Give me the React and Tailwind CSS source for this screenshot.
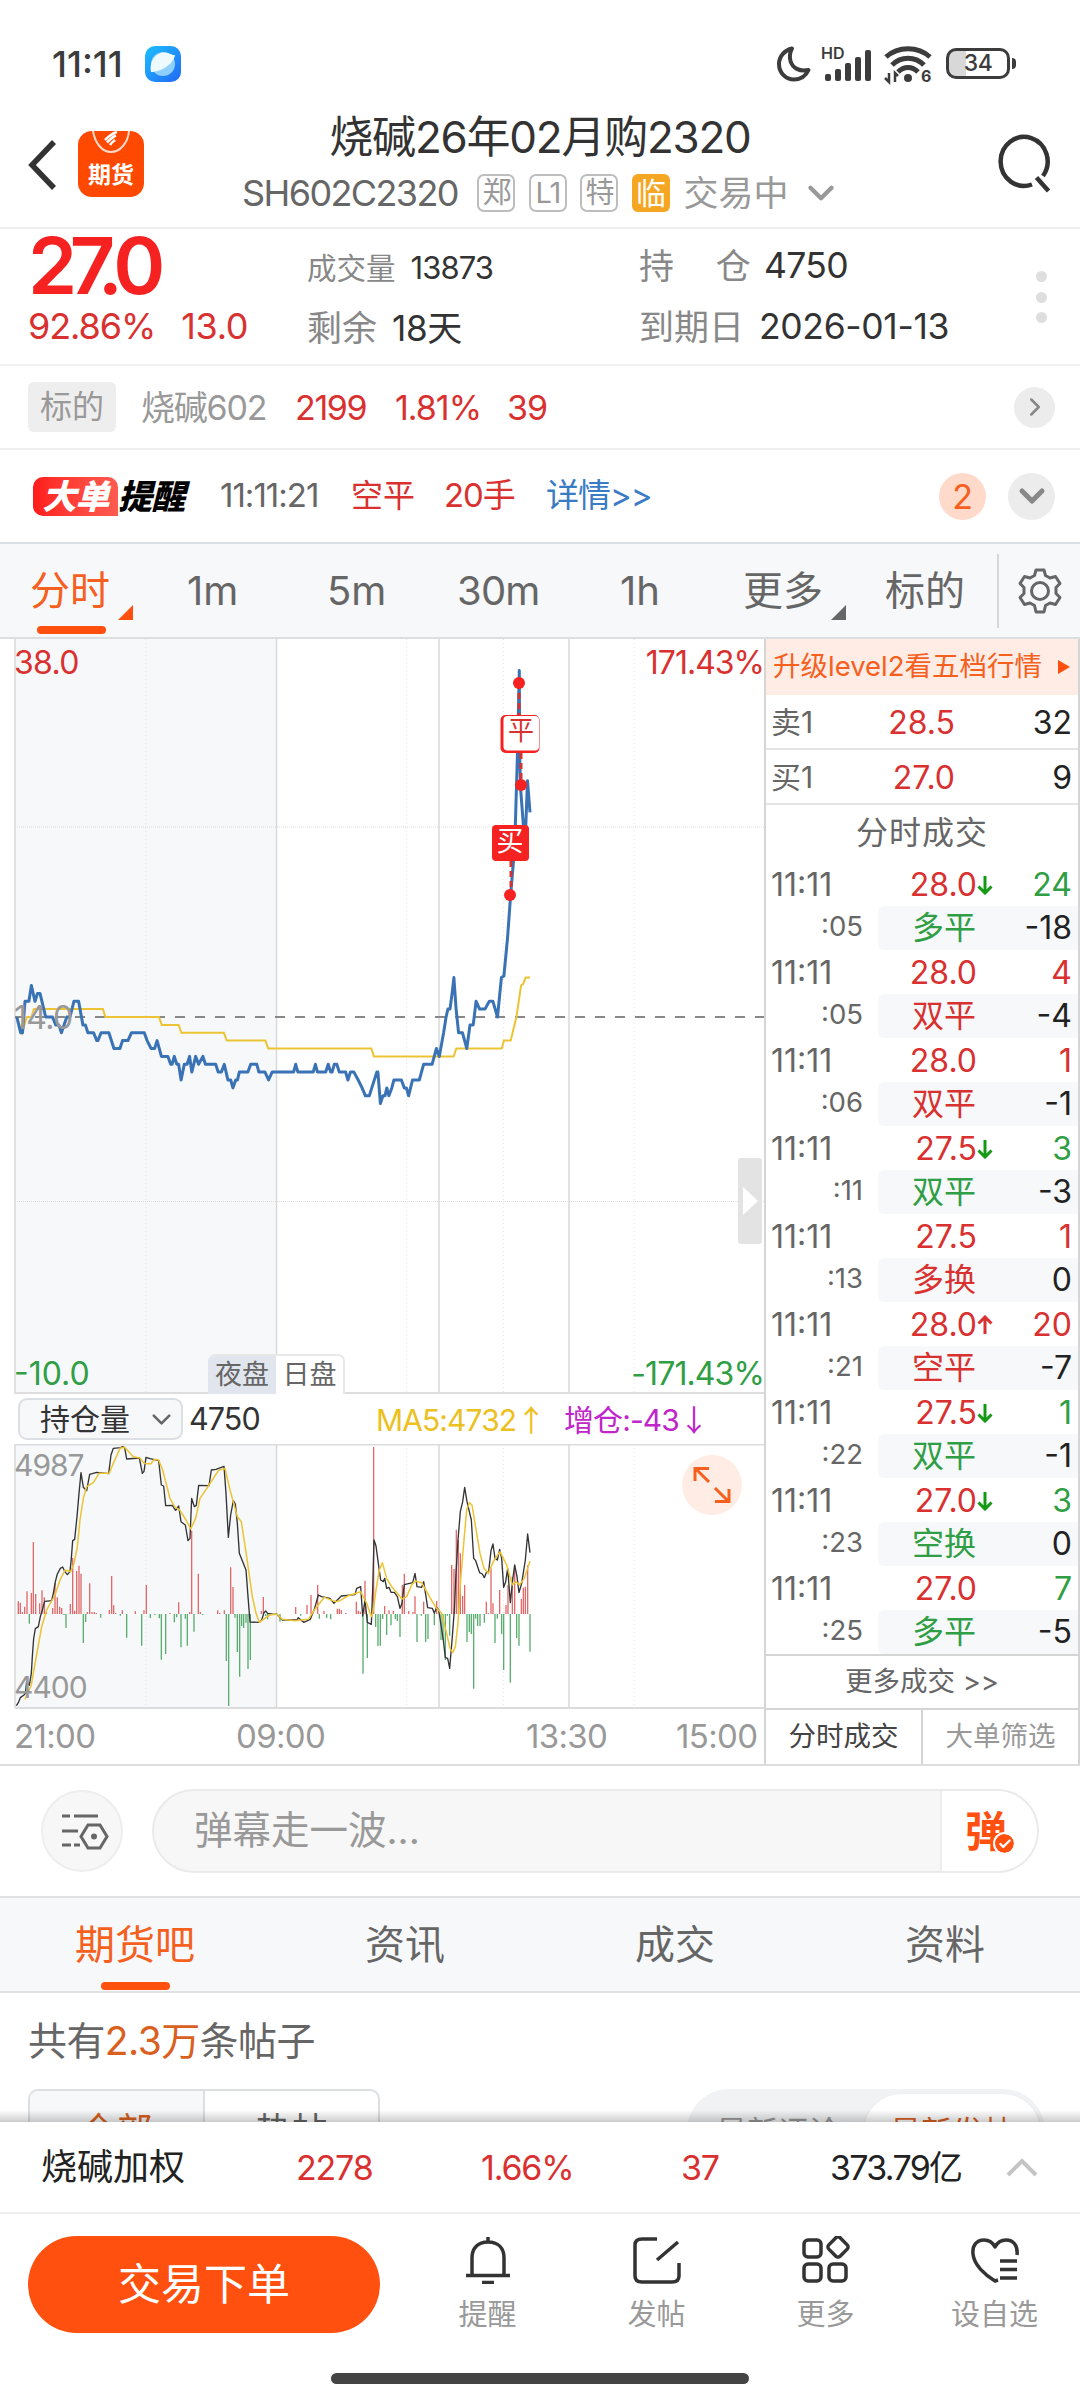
import React from 'react';
import { ChevronDown, ChevronRight, Check } from 'lucide-react';

const PRICE = [
  [47, 14], [58, 13], [63, 13], [70, 15], [81, 15], [88, 16], [98, 15], [105, 15.5], [112, 15.5], [128, 14], [147, 14], [156, 13.5],
  [165, 13.5], [172, 13], [187, 14], [196, 14], [207, 15], [220, 15], [232, 13.5], [239, 13.5], [246, 13], [262, 13], [271, 12.5],
  [274, 12.5], [283, 13], [305, 13], [319, 12], [336, 12], [343, 12.5], [358, 12.5], [368, 13], [404, 13], [412, 12.5], [423, 12],
  [433, 12], [440, 12.5], [452, 11.5], [470, 11.5], [478, 11], [482, 11], [488, 11.5], [495, 11], [500, 11], [507, 10], [516, 11],
  [524, 11], [531, 11.5], [537, 10.5], [548, 11.5], [556, 11], [568, 11.5], [575, 11], [604, 11], [611, 10.5], [620, 10.5],
  [628, 11], [638, 10], [646, 10], [652, 9.5], [660, 10], [665, 10], [670, 10.5], [694, 10.5], [702, 11], [719, 11], [725, 10.5],
  [742, 10.5], [752, 10], [762, 10.5], [822, 10.5], [828, 11], [834, 10.5], [877, 10.5], [883, 11], [889, 10.5], [912, 10.5],
  [919, 11], [926, 10.5], [930, 10.5], [936, 11], [943, 11], [950, 10.5], [968, 10.5], [974, 10], [981, 10.5], [991, 10.5],
  [1003, 10], [1014, 9.5], [1023, 9], [1034, 9], [1041, 9.5], [1055, 10.5], [1058, 10.5], [1065, 8.5], [1072, 9], [1078, 9],
  [1083, 9.5], [1089, 9], [1097, 9.5], [1103, 10], [1124, 10], [1132, 9.5], [1138, 9.5], [1144, 9], [1155, 10], [1174, 10],
  [1186, 11], [1210, 11], [1222, 12], [1230, 11.5], [1242, 13], [1249, 14], [1254, 14.5], [1260, 14.5], [1266, 15.5], [1271, 16.5],
  [1277, 14.5], [1284, 13], [1295, 13], [1307, 12], [1316, 13.5], [1325, 13.5], [1333, 15], [1343, 14.5], [1358, 14.5], [1370, 15],
  [1380, 15], [1393, 14], [1404, 16.5], [1411, 16.6], [1421, 19], [1430, 21.8], [1438, 24], [1443, 26.3], [1449, 30.8],
  [1454, 36], [1455, 30.8], [1458, 28.4], [1466, 26], [1471, 25.5], [1477, 29], [1484, 27],
];

const AVERAGE = [
  [47, 14], [62, 13], [75, 14], [88, 14], [95, 14.5], [288, 14.5], [295, 14], [445, 14], [453, 13.5], [500, 13.5], [508, 13],
  [627, 13], [635, 12.5], [743, 12.5], [751, 12], [1040, 12], [1047, 11.5], [1270, 11.5], [1278, 12], [1405, 12], [1411, 12.5],
  [1430, 12.5], [1446, 14], [1459, 16], [1465, 16.1], [1472, 16.5], [1484, 16.5],
];

const OPEN_INTEREST =
  '49,827 55,818 61,803 72,795 76,790 80,755 88,766 94,730 97,680 101,625 106,596 115,590 121,560 127,540 134,514 155,512 160,490 166,455 172,432 181,415 188,411 194,424 202,434 210,425 214,385 218,332 224,328 231,260 237,190 243,128 250,172 260,182 269,133 290,127 326,131 333,75 340,55 362,53 368,50 374,53 380,87 418,84 427,130 432,124 438,82 450,86 476,92 484,165 491,168 497,227 517,226 527,241 536,228 543,275 556,285 564,332 570,325 575,205 583,230 589,226 596,166 627,167 634,120 648,118 672,109 678,190 685,322 692,255 700,212 706,222 712,280 718,370 738,420 744,500 750,576 778,577 785,570 792,548 797,543 803,550 822,553 830,552 847,570 891,570 895,563 911,577 931,568 943,538 955,495 965,500 990,505 1002,520 1024,498 1065,494 1070,475 1082,470 1088,558 1095,510 1102,577 1114,583 1118,480 1122,330 1128,348 1135,400 1142,450 1150,455 1154,445 1160,475 1167,472 1173,487 1183,487 1192,500 1200,535 1206,520 1213,464 1238,458 1245,430 1251,470 1265,472 1271,455 1278,500 1283,533 1297,535 1303,550 1310,532 1316,540 1323,585 1330,630 1336,683 1343,685 1349,715 1357,620 1363,540 1368,430 1374,330 1381,245 1388,215 1394,172 1401,215 1414,270 1421,385 1427,392 1439,428 1447,432 1453,443 1460,425 1466,425 1473,362 1479,342 1485,385 1492,390 1499,358 1505,385 1511,472 1517,455 1523,415 1531,518 1538,450 1544,405 1551,440 1557,488 1565,460 1576,390 1583,312 1590,368';

const MA5 =
  '75,808 94,765 107,690 125,590 140,540 165,495 180,450 195,420 212,425 222,400 232,350 240,270 250,205 260,170 280,158 297,130 328,130 340,100 360,55 374,52 400,80 420,84 432,100 452,102 463,88 476,90 488,120 510,205 525,232 538,238 558,270 572,297 587,265 600,205 627,165 655,122 675,115 690,180 712,260 724,275 740,380 757,500 768,550 778,577 790,568 810,555 830,552 847,568 884,572 925,568 943,540 973,502 1006,515 1020,512 1045,497 1082,485 1100,520 1114,560 1120,540 1128,480 1138,420 1147,398 1160,445 1175,470 1192,490 1206,507 1220,500 1235,465 1245,453 1265,458 1280,485 1297,515 1310,535 1325,550 1340,610 1350,655 1358,668 1366,650 1374,580 1382,450 1392,330 1400,240 1408,218 1416,225 1425,280 1440,370 1452,415 1465,430 1480,395 1500,365 1510,385 1520,405 1537,465 1548,455 1558,465 1573,445 1590,393';

const UP_BARS = [
  [55, 514], [61, 518], [67, 546], [74, 530], [81, 484], [94, 489], [100, 336], [107, 492], [119, 520], [126, 481], [133, 502],
  [139, 545], [158, 534], [165, 460], [172, 502], [179, 530], [185, 534], [211, 522], [218, 384], [224, 542], [230, 423], [237, 407],
  [243, 431], [262, 546], [269, 460], [276, 546], [283, 546], [289, 549], [328, 540], [335, 438], [341, 526], [347, 549], [367, 541],
  [406, 544], [432, 541], [439, 465], [510, 549], [536, 517], [569, 546], [575, 302], [595, 431], [601, 546], [653, 541], [659, 549],
  [673, 541], [692, 412], [699, 471], [784, 543], [790, 501], [887, 531], [921, 525], [933, 495], [953, 465], [972, 543],
  [1012, 536], [1018, 536], [1024, 540], [1037, 549], [1069, 515], [1075, 542], [1081, 545], [1095, 452], [1121, 51], [1154, 528],
  [1167, 541], [1180, 543], [1207, 465], [1213, 431], [1226, 543], [1239, 546], [1245, 499], [1271, 515], [1310, 513], [1355, 405],
  [1362, 417], [1369, 299], [1375, 330], [1381, 370], [1388, 498], [1394, 465], [1459, 515], [1465, 549], [1473, 415], [1479, 520],
  [1499, 480], [1518, 525], [1524, 465], [1537, 440], [1544, 405], [1564, 507], [1570, 473], [1576, 470], [1583, 405],
];

const DOWN_BARS = [
  [88, 581], [192, 555], [198, 594], [250, 639], [257, 576], [302, 563], [361, 557], [380, 623], [425, 647], [451, 564], [465, 555],
  [478, 565], [484, 689], [497, 672], [523, 577], [530, 562], [543, 652], [556, 566], [562, 647], [582, 605], [608, 555], [679, 693],
  [686, 828], [705, 563], [712, 666], [719, 740], [725, 588], [731, 594], [738, 578], [744, 717], [751, 690], [797, 558], [803, 568],
  [840, 575], [902, 557], [958, 566], [980, 564], [992, 568], [1089, 731], [1102, 684], [1127, 591], [1134, 648], [1141, 647],
  [1148, 567], [1160, 615], [1173, 586], [1186, 568], [1192, 573], [1200, 621], [1251, 636], [1264, 557], [1277, 636], [1284, 627],
  [1303, 586], [1323, 630], [1329, 630], [1336, 690], [1342, 557], [1349, 617], [1401, 636], [1408, 606], [1414, 612], [1421, 776],
  [1427, 566], [1433, 588], [1440, 588], [1453, 578], [1485, 639], [1492, 566], [1505, 612], [1511, 720], [1531, 758], [1550, 624],
  [1557, 647], [1590, 665],
];

const TRADES = [
  { sec: ':05', price: '28.0', dir: 'down', qty: 24, kind: '多平', delta: '-18', up: false },
  { sec: ':05', price: '28.0', qty: 4, kind: '双平', delta: '-4', up: true },
  { sec: ':06', price: '28.0', qty: 1, kind: '双平', delta: '-1', up: true },
  { sec: ':11', price: '27.5', dir: 'down', qty: 3, kind: '双平', delta: '-3', up: false },
  { sec: ':13', price: '27.5', qty: 1, kind: '多换', delta: '0', up: true },
  { sec: ':21', price: '28.0', dir: 'up', qty: 20, kind: '空平', delta: '-7', up: true },
  { sec: ':22', price: '27.5', dir: 'down', qty: 1, kind: '双平', delta: '-1', up: false },
  { sec: ':23', price: '27.0', dir: 'down', qty: 3, kind: '空换', delta: '0', up: false },
  { sec: ':25', price: '27.0', qty: 7, kind: '多平', delta: '-5', up: false },
];

// price 14.0 sits on y=1017, one point is 15.75px high
const toPoints = rows => rows.map(([t, p]) => `${(t / 2.8).toFixed(1)},${(1017 - (p - 14) * 15.75).toFixed(1)}`).join(' ');
const toBars = rows => rows.map(([x, y]) => `M${x} 552V${y}`).join('');

const StatusBar = () => (
  <div className="flex h-[109px] items-center pt-[18px] pl-[52px] pr-[64px] text-[#3c3c3c]">
    <span className="w-[93px] text-[36px] font-medium">11:11</span>
    <svg width="36" height="36" viewBox="0 0 36 36">
      <defs>
        <linearGradient id="globe" x1="0" y1="0" x2="1" y2="1">
          <stop offset="0" stopColor="#1cc0ff" />
          <stop offset="1" stopColor="#2468f4" />
        </linearGradient>
      </defs>
      <rect width="36" height="36" rx="10" fill="url(#globe)" />
      <circle cx="18" cy="18" r="12" fill="#8fd0ff" />
      <path d="M6 26C4 14 12 6 20 6.500c5 .5 7 3 10 2.500C29 17 17 26 6 26z" fill="#effaff" />
    </svg>
    <div className="ml-auto flex items-center">
      <svg width="38" height="38" viewBox="0 0 38 38" fill="none" stroke="#3c3c3c" strokeWidth="4" strokeLinejoin="round">
        <path d="M17 3.500C10 5 4 11 4 19c0 9 7 15.500 15 15.500 7 0 12-4 14.500-9.500-9 2-16-2-18-9-1-4-.5-9 1.500-12.500z" />
      </svg>
      <svg className="ml-[10px] overflow-visible" width="50" height="38" viewBox="0 0 50 38" fill="#3c3c3c">
        <text x="-2" y="14" fontSize="16" fontWeight="600" fontFamily="Inter">HD</text>
        <rect x="2" y="29" width="6" height="7" rx="2" />
        <rect x="12" y="24" width="6" height="12" rx="2" />
        <rect x="22" y="18" width="6" height="18" rx="2" />
        <rect x="32" y="12" width="6" height="24" rx="2" />
        <rect x="42" y="5" width="6" height="31" rx="2" />
      </svg>
      <svg className="ml-[11px] overflow-visible" width="48" height="38" viewBox="0 0 48 38" fill="none" stroke="#3c3c3c" strokeWidth="5">
        <path d="M2 12c12-11 32-11 44 0" />
        <path d="M8 20c9-9 23-9 32 0" />
        <path d="M14 27c6-6 14-6 20 0" />
        <circle cx="24" cy="33" r="4" fill="#3c3c3c" stroke="none" />
        <path d="M5 28v9l-4-4M11 37v-9l3 3" strokeWidth="2.500" />
        <text x="37" y="37" fontSize="16" fontWeight="700" fontFamily="Inter" fill="#3c3c3c" stroke="none">6</text>
      </svg>
      <div className="ml-[14px] flex h-[31px] w-[64px] items-center justify-center rounded-[10px] border-[3.500px] border-[#3c3c3c] bg-linear-to-r from-[#d8d8d8] from-30% to-white to-30% text-[23px] font-medium tracking-tight">34</div>
      <div className="ml-[2px] h-[11px] w-[4px] rounded-r bg-[#3c3c3c]" />
    </div>
  </div>
);

const Tag = ({ children }) => (
  <span className="flex h-[38px] w-[38px] items-center justify-center rounded-[7px] border-2 border-[#bdbdbd] text-[29px] tracking-[-0.04em] text-[#999]">
    {children}
  </span>
);

const Header = () => (
  <div className="flex h-[120px] items-start border-b-2 border-[#eeeeee] pl-[27px] pr-[28px]">
    <svg className="mt-[31px]" width="30" height="50" viewBox="0 0 30 50" fill="none" stroke="#333" strokeWidth="5.500">
      <path d="M27 2L5 25l22 23" />
    </svg>
    <div className="relative mt-[22px] ml-[21px] flex h-[66px] w-[66px] items-end justify-center overflow-hidden rounded-[14px] bg-[#ff4800] pb-[8px]">
      <svg className="absolute inset-x-0 top-0" width="66" height="26" viewBox="0 0 66 26" fill="none" stroke="#ffd9c8" strokeWidth="2">
        <path d="M15 0c2 12 9 21 18 21s17-9 18-21" />
        <path d="M27 9C31 5 34 2 39 1M29 11.500c4-4 6-6 9-7M32 14c2-3 4-4 5-5" stroke="#fff" strokeWidth="2.500" />
      </svg>
      <span className="text-[23px] leading-[28px] font-bold text-white">期货</span>
    </div>
    <div className="flex w-[712px] flex-col items-center pl-[80px]">
      <h1 className="h-[59px] text-[44px] leading-[57px] tracking-[-0.028em] whitespace-nowrap text-[#333]">烧碱26年02月购2320</h1>
      <div className="flex h-[50px] items-center gap-[13.500px] pl-[4px]">
        <span className="mr-[6px] text-[36px] tracking-[-0.045em] text-[#666]">SH602C2320</span>
        <Tag>郑</Tag>
        <Tag>L1</Tag>
        <Tag>特</Tag>
        <span className="flex h-[38px] w-[38px] items-center justify-center rounded-[6px] bg-[#f5a623] text-[30px] text-white">临</span>
        <span className="text-[35px] whitespace-nowrap text-[#999]">交易中</span>
        <ChevronDown className="-ml-0.5 shrink-0" size={42} strokeWidth={2.5} color="#999" />
      </div>
    </div>
    <svg className="mt-[30px] ml-auto overflow-visible" width="54" height="56" viewBox="0 0 54 56" fill="none" stroke="#333" strokeWidth="4.500">
      <path d="M34 45.500A23.500 24.500 0 1 1 45 37" />
      <path d="M38.500 38.500l12 13.500" />
    </svg>
  </div>
);

const Quote = () => (
  <div className="flex h-[137px] border-b-2 border-[#f2f2f2] pl-[28px]">
    <div className="w-[279px]">
      <div className="h-[70px] text-[79px] leading-[72px] font-semibold tracking-[-0.095em] text-[#f62222]">27.0</div>
      <div className="flex h-[54px] items-center gap-[26px] text-[36px] tracking-[-0.03em] text-[#d93030]">
        <span>92.86%</span>
        <span className="tracking-[-0.01em]">13.0</span>
      </div>
    </div>
    <div className="w-[332px] pt-[9px] text-[#333]">
      <div className="flex h-[60px] items-center text-[31px] tracking-[-0.03em]">
        <span className="mr-[15px] text-[29.500px] tracking-normal text-[#888]">成交量</span>13873
      </div>
      <div className="flex h-[60px] items-center text-[35px] tracking-[-0.01em]">
        <span className="mr-[15px] tracking-normal text-[#888]">剩余</span>18天
      </div>
    </div>
    <div className="w-[397px] pt-[7px] text-[#333]">
      <div className="flex h-[60px] items-center text-[35.500px] tracking-[-0.02em]">
        <span className="mr-[14px] flex w-[111px] justify-between text-[35px] text-[#888]"><span>持</span><span>仓</span></span>4750
      </div>
      <div className="flex h-[62px] items-center text-[35.500px] tracking-[-0.01em]">
        <span className="mr-[15px] text-[35px] tracking-normal text-[#888]">到期日</span>2026-01-13
      </div>
    </div>
    <div className="flex flex-col gap-[9.500px] pt-[42px]">
      <i className="h-[11px] w-[11px] rounded-full bg-[#dedede]" />
      <i className="h-[11px] w-[11px] rounded-full bg-[#dedede]" />
      <i className="h-[11px] w-[11px] rounded-full bg-[#dedede]" />
    </div>
  </div>
);

const Underlying = () => (
  <div className="flex h-[84px] items-center border-b-2 border-[#eeeeee] pl-[28px] pr-[25px] text-[34px] tracking-[-0.03em] text-[#d93030]">
    <span className="flex h-[50px] w-[88px] items-center justify-center rounded-[6px] bg-[#eeeeee] text-[32px] tracking-normal text-[#999]">标的</span>
    <span className="ml-[25px] w-[154px] tracking-[-0.035em] text-[#999]">烧碱602</span>
    <span className="w-[100px] tracking-[-0.04em]">2199</span>
    <span className="w-[112px]">1.81%</span>
    <span>39</span>
    <span className="ml-auto flex h-[41px] w-[41px] items-center justify-center rounded-full bg-[#ececec]">
      <ChevronRight size={30} strokeWidth={2} color="#888" />
    </span>
  </div>
);

const BigOrder = () => (
  <div className="flex h-[92px] items-center pl-[33px] pr-[25px] text-[33px] text-[#d93030]">
    <div className="flex w-[187px] items-center">
      <span className="flex h-[39px] w-[85px] items-center justify-center rounded-tl-[10px] rounded-tr-[10px] rounded-bl-[10px] bg-linear-to-r from-[#ff1a1a] to-[#ff5a50] text-[34px] font-black tracking-tight text-white italic">大单</span>
      <span className="text-[34px] font-black tracking-tight text-black italic">提醒</span>
    </div>
    <span className="w-[131px] tracking-[-0.03em] text-[#666]">11:11:21</span>
    <span className="w-[93px] text-[32px]">空平</span>
    <span className="w-[102px] tracking-[-0.035em]">20手</span>
    <span className="tracking-[-0.03em] text-[#3a7cc4]">详情&gt;&gt;</span>
    <span className="ml-auto flex h-[47px] w-[47px] items-center justify-center rounded-full bg-[#ffd9ca] text-[34px] text-[#f5601e]">2</span>
    <span className="ml-[22px] flex h-[47px] w-[47px] items-center justify-center rounded-full bg-[#ececec]">
      <ChevronDown size={40} strokeWidth={3} color="#888" />
    </span>
  </div>
);

const PeriodTabs = () => (
  <div className="flex h-[97px] items-center border-y-2 border-[#dcdfe2] bg-[#f7f8fa] pl-[30px] text-[40px] text-[#666]">
    <div className="relative w-[157px] text-[#f5601e]">
      分时
      <i className="absolute top-[44px] left-[88px] border-b-[15px] border-l-[15px] border-b-[#ff500f] border-l-transparent" />
      <i className="absolute -bottom-[13px] left-[7px] h-[8px] w-[69px] rounded-full bg-[#ff500f]" />
    </div>
    <span className="w-[140px]">1m</span>
    <span className="w-[130px]">5m</span>
    <span className="w-[163px] tracking-[-0.02em]">30m</span>
    <span className="w-[123px]">1h</span>
    <div className="relative w-[142px]">
      更多
      <i className="absolute top-[44px] left-[88px] border-b-[15px] border-l-[15px] border-b-[#666] border-l-transparent" />
    </div>
    <span className="w-[112px]">标的</span>
    <div className="flex h-[74px] flex-1 items-center border-l-2 border-[#d5d7da] pl-[19px]">
      <svg width="44" height="46" viewBox="0 0 44 46" fill="none" stroke="#666" strokeWidth="3" strokeLinejoin="round">
        <path d="M18 2h8l1.500 5.500 4.500 2.500 5.500-1.500 4.500 7-4 4v6l4 4-4.500 7-5.500-1.500-4.500 2.500L26 44h-8l-1.500-6.500-4.500-2.500-5.500 1.500-4.500-7 4-4v-6l-4-4 4.500-7L12 10l4.500-2.500z" />
        <circle cx="22" cy="23" r="8.500" />
      </svg>
    </div>
  </div>
);

const GridLines = ({ top, bottom }) => (
  <g>
    <rect x="15" y={top} width="261" height={bottom - top} fill="#f6f8fa" />
    {[15, 276.5, 439, 569].map(x => (
      <path key={x} d={`M${x} ${top}V${bottom}`} stroke="#d9d9d9" strokeWidth="1.500" />
    ))}
    {[146, 406.5, 503.5, 634].map(x => (
      <path key={x} d={`M${x} ${top}V${bottom}`} stroke="#e4e4e4" strokeDasharray="1 3" />
    ))}
  </g>
);

const PriceChart = () => (
  <div className="relative h-[755px]">
    <svg width="764" height="755" viewBox="0 639 764 755" fill="none">
      <GridLines top={639} bottom={1394} />
      <path d="M15 827H764M15 1201.500H764" stroke="#dcdcdc" strokeDasharray="1 1" />
      <path d="M15 1393H764" stroke="#dedede" strokeWidth="2" />
      <path d="M15 1017H764" stroke="#888" strokeWidth="2" strokeDasharray="10 10" />
      <polyline points={toPoints(AVERAGE)} stroke="#ecc433" strokeWidth="2" />
      <polyline points={toPoints(PRICE)} stroke="#3973b5" strokeWidth="3" strokeLinejoin="round" />
      <path d="M519 683V715M521 753V785M511 861V895" stroke="#d93030" strokeWidth="3" strokeDasharray="6 4" />
      <g fill="#f62222">
        <circle cx="519" cy="683" r="6" />
        <circle cx="521" cy="785" r="6" />
        <circle cx="510" cy="895" r="6" />
        <rect x="500.500" y="715" width="39" height="38" rx="5" />
        <rect x="492" y="825" width="37" height="36" rx="4" />
      </g>
      <rect x="503.500" y="716" width="35.500" height="34.500" rx="4" fill="#fff" />
      <text x="521" y="740" fontSize="26" textAnchor="middle" fill="#d93030">平</text>
      <text x="510" y="851" fontSize="27" textAnchor="middle" fill="#fff">买</text>
      <rect x="738" y="1158" width="24" height="86" rx="3" fill="#e3e3e3" />
      <path d="M743 1187v28l15-14z" fill="#fff" />
      <g fontSize="32" letterSpacing="-0.700">
        <text x="14" y="673.500" fill="#d93030">38.0</text>
        <text x="764" y="673.500" textAnchor="end" fill="#d93030" letterSpacing="-1">171.43%</text>
        <text x="14" y="1029" fill="#999">14.0</text>
        <text x="14" y="1384.500" fill="#2f9e44" letterSpacing="0">-10.0</text>
        <text x="764" y="1384.500" textAnchor="end" fill="#2f9e44" letterSpacing="-0.900">-171.43%</text>
      </g>
    </svg>
    <div className="absolute bottom-0 left-[208px] flex h-[40px] overflow-hidden rounded-t-[7px] border-t-2 border-r-2 border-[#e8e8e8] text-[27px] text-[#666]">
      <span className="flex w-[68px] items-center justify-center bg-[#e1e5ee]">夜盘</span>
      <span className="flex w-[67px] items-center justify-center bg-white">日盘</span>
    </div>
  </div>
);

const OpenInterest = () => (
  <div>
    <div className="flex h-[50px] items-center pl-[18px] text-[30px] tracking-[-0.03em] text-[#333]">
      <div className="flex h-[42px] w-[165px] items-center rounded-[9px] border-2 border-[#dcdfe3] bg-[#f7f8fa] pl-[20px] pr-[4px]">
        <span className="tracking-normal">持仓量</span>
        <ChevronDown className="ml-auto" size={31} strokeWidth={2} color="#666" />
      </div>
      <span className="ml-[6px] w-[187px] text-[30.500px]">4750</span>
      <span className="w-[188px] text-[30px] tracking-[-0.03em] whitespace-nowrap text-[#ecc020]">MA5:4732<i className="font-['Noto_Sans_CJK_SC'] not-italic">↑</i></span>
      <span className="text-[30px] whitespace-nowrap text-[#c026c9]">增仓:-43<i className="font-['Noto_Sans_CJK_SC'] not-italic">↓</i></span>
    </div>
    <div className="relative h-[265px]">
      <svg width="764" height="265" viewBox="0 1444 764 265" fill="none">
        <GridLines top={1444} bottom={1708} />
        <path d="M15 1444.500H764M15 1708H764" stroke="#dcdcdc" strokeWidth="2" />
        <g transform="translate(0 1430) scale(0.33333)">
          <path d={toBars(UP_BARS)} stroke="#e26a6a" strokeWidth="4" />
          <path d={toBars(DOWN_BARS)} stroke="#5aae70" strokeWidth="4" />
          <polyline points={OPEN_INTEREST} stroke="#333" strokeWidth="4" strokeLinejoin="round" />
          <polyline points={MA5} stroke="#ecc433" strokeWidth="4.500" strokeLinejoin="round" />
        </g>
        <g fontSize="30" fill="#999" letterSpacing="-1">
          <text x="14" y="1476">4987</text>
          <text x="14" y="1698">4400</text>
        </g>
      </svg>
      <div className="absolute top-[11px] left-[682px] flex h-[60px] w-[60px] items-center justify-center rounded-full bg-[#ffece4]">
        <svg width="40" height="40" viewBox="0 0 40 40" fill="none" stroke="#f5601e" strokeWidth="3">
          <path d="M17 17L4 4M3 16V3.500h14M23 23l13 13M37 24v12.500H23" />
        </svg>
      </div>
    </div>
    <div className="flex h-[56px] items-center pl-[14px] text-[33px] tracking-[-0.02em] text-[#999]">
      <span className="w-[222px]">21:00</span>
      <span className="w-[290px]">09:00</span>
      <span className="w-[150px]">13:30</span>
      <span>15:00</span>
    </div>
  </div>
);

const Arrow = ({ dir }) => (
  <svg width="16" height="20" viewBox="0 0 16 20" fill="none" strokeWidth="3" stroke={dir === 'up' ? '#d93030' : '#129a12'}>
    <path d={dir === 'up' ? 'M8 19V2M1.500 8.500L8 2l6.500 6.500' : 'M8 1v17M1.500 11.500L8 18l6.500-6.500'} />
  </svg>
);

const TradeRow = ({ trade }) => {
  const tone = trade.up ? 'text-[#d93030]' : 'text-[#2f9e44]';
  return (
    <div className="h-[88px] text-[32px]">
      <div className="flex h-[44px] items-center pt-[2px] pl-[5px] pr-[6px]">
        <span className="w-[70px] text-[32px] text-[#666]">11:11</span>
        <span className="w-[136px] text-right text-[#d93030]">{trade.price}</span>
        <span className="w-[20px]">{trade.dir && <Arrow dir={trade.dir} />}</span>
        <span className={`flex-1 text-right ${tone}`}>{trade.qty}</span>
      </div>
      <div className="flex h-[44px]">
        <span className="w-[97px] text-right text-[27.500px] leading-[41px] text-[#666]">{trade.sec}</span>
        <div className="ml-[15px] flex flex-1 items-center rounded-l-[6px] bg-[#f6f8fa] pr-[6px] pl-[34px]">
          <span className={tone}>{trade.kind}</span>
          <span className="flex-1 text-right text-[#222]">{trade.delta}</span>
        </div>
      </div>
    </div>
  );
};

const OrderBook = () => (
  <div className="flex w-[316px] flex-col border-x-2 border-[#d5d5d5]">
    <div className="flex h-[56px] items-center bg-[#ffece4] pl-[7px] text-[27.500px] whitespace-nowrap text-[#f5601e]">
      升级level2看五档行情
      <i className="ml-auto mr-[8px] border-y-[7px] border-l-[12px] border-y-transparent border-l-[#ff500f]" />
    </div>
    {[['卖1', '28.5', 32], ['买1', '27.0', 9]].map(([label, price, qty]) => (
      <div key={label} className="flex h-[55px] items-center border-b-2 border-[#e4e4e4] pt-[2px] pl-[5px] pr-[6px] text-[32px]">
        <span className="w-[70px] text-[30px] text-[#666]">{label}</span>
        <span className="w-[114px] text-right text-[#d93030]">{price}</span>
        <span className="flex-1 text-right text-[#222]">{qty}</span>
      </div>
    ))}
    <div className="h-[57px] text-center text-[32px] leading-[55px] tracking-[0.03em] text-[#666]">分时成交</div>
    {TRADES.map((trade, idx) => <TradeRow key={idx} trade={trade} />)}
    <div className="flex h-[54px] items-center justify-center border-t-2 border-[#d5d5d5] text-[27.500px] text-[#666]">更多成交 &gt;&gt;</div>
    <div className="flex flex-1 border-t-2 border-[#d5d5d5] text-[27.500px]">
      <span className="flex flex-1 items-center justify-center border-r-2 border-[#d5d5d5] text-[#444]">分时成交</span>
      <span className="flex flex-1 items-center justify-center text-[#999]">大单筛选</span>
    </div>
  </div>
);

const CommentBar = () => (
  <div className="flex h-[130px] items-center pl-[41px]">
    <div className="flex h-[82px] w-[82px] items-center justify-center rounded-full border-2 border-[#eeeeee] bg-[#f7f7f7]">
      <svg className="mt-[2px] ml-[5px]" width="48" height="38" viewBox="0 0 48 38" fill="none" stroke="#666" strokeWidth="3">
        <path d="M1 3h8M13 3h24M1 18h16M1 32h9M13 32h6" />
        <path d="M27 12h12l7 11.500L39 35H27l-7-11.500z" />
        <circle cx="33" cy="23.500" r="3" fill="#666" stroke="none" />
      </svg>
    </div>
    <div className="ml-[29px] flex h-[84px] w-[887px] overflow-hidden rounded-full border-2 border-[#eaeaea] bg-[#f7f7f7]">
      <span className="flex-1 pl-[40px] text-[38.500px] leading-[79px] text-[#999]">弹幕走一波...</span>
      <div className="relative flex w-[97px] items-center border-l-2 border-[#eeeeee] bg-white pl-[23px] text-[42px] font-bold text-[#ff500f]">
        弹
        <span className="absolute top-[43px] left-[53px] flex h-[19px] w-[19px] items-center justify-center rounded-full bg-[#ff500f] outline-2 outline-white">
          <Check size={14} strokeWidth={4} color="#fff" />
        </span>
      </div>
    </div>
  </div>
);

const SectionTabs = () => (
  <div className="flex h-[97px] border-y-2 border-[#dfe1e3] bg-[#f7f8fa] pt-px text-[40px] text-[#666]">
    <div className="relative flex w-1/4 items-center justify-center text-[#f5601e]">
      期货吧
      <i className="absolute bottom-px left-[101px] h-[8px] w-[69px] rounded-full bg-[#ff500f]" />
    </div>
    <span className="flex w-1/4 items-center justify-center">资讯</span>
    <span className="flex w-1/4 items-center justify-center">成交</span>
    <span className="flex w-1/4 items-center justify-center">资料</span>
  </div>
);

const Posts = () => (
  <div className="relative h-[129px] overflow-hidden pl-[28px] pr-[35px] text-[#666]">
    <p className="h-[96px] text-[39px] leading-[95px] tracking-[-0.015em]">共有<span className="text-[#d9601e]">2.3万</span>条帖子</p>
    <div className="flex justify-between">
      <div className="flex h-[84px] w-[352px] overflow-hidden rounded-[10px] border-2 border-[#dcdfe2] text-[36px]">
        <span className="flex-1 bg-[#f6f8fa] text-center leading-[80px] text-[#d9601e]">全部</span>
        <span className="flex-1 border-l-2 border-[#dcdfe2] text-center leading-[80px]">热帖</span>
      </div>
      <div className="flex h-[84px] w-[358px] rounded-full bg-[#f1f2f4] p-[5px] text-[31px]">
        <span className="flex-1 text-center leading-[76px] text-[#999]">最新评论</span>
        <span className="w-[176px] rounded-full bg-white text-center leading-[76px] text-[#d9601e] shadow">最新发帖</span>
      </div>
    </div>
    <div className="absolute inset-x-0 bottom-0 h-[12px] bg-linear-to-b from-transparent to-black/20" />
  </div>
);

const ACTIONS = [
  { label: '提醒', icon: <path d="M24 1v5M8 39V22C8 12 14 6 24 6s16 6 16 16v17M2 39.500h44M18 46.500h12" /> },
  { label: '发帖', icon: <path d="M24 3H9C4 3 2 5 2 9v31c0 4 2 6 7 6h30c5 0 7-2 7-6V27M45 6L24 24" /> },
  {
    label: '更多',
    icon: (
      <>
        <rect x="2" y="4" width="17" height="17" rx="4" />
        <rect x="2" y="28" width="17" height="17" rx="4" />
        <rect x="27" y="28" width="17" height="17" rx="4" />
        <rect x="28" y="3" width="16" height="16" rx="3" transform="rotate(45 36 11)" />
      </>
    ),
  },
  { label: '设自选', icon: <path d="M46 19C47 9 42 4 35 4c-5 0-9 3-11 7C22 7 18 4 13 4 6 4 1 9 2 18c1 11 12 21 22 27l3-1M29 25h17M29 33.500h17M29 42h17" /> },
];

const BottomBar = () => (
  <div className="bg-white">
    <div className="flex h-[92px] items-center border-b-2 border-[#eeeeee] pl-[41px] text-[34px] tracking-[-0.035em] text-[#d93030]">
      <span className="w-[255px] text-[36px] tracking-normal text-[#222]">烧碱加权</span>
      <span className="w-[185px]">2278</span>
      <span className="w-[200px]">1.66%</span>
      <span className="w-[149px]">37</span>
      <span className="w-[175px] tracking-[-0.05em] text-[#222]">373.79亿</span>
      <svg width="34" height="20" viewBox="0 0 34 20" fill="none" stroke="#c4c4c4" strokeWidth="4">
        <path d="M3 18L17 4l14 14" />
      </svg>
    </div>
    <div className="flex h-[142px] pt-[22px] pl-[28px]">
      <button className="h-[97px] w-[352px] rounded-full bg-[#ff500f] text-[43px] text-white">交易下单</button>
      <div className="ml-[23px] flex">
        {ACTIONS.map(({ label, icon }) => (
          <div key={label} className="flex w-[169px] flex-col items-center">
            <svg width="48" height="48" viewBox="0 0 48 48" fill="none" stroke="#333" strokeWidth="3.500" strokeLinejoin="round">{icon}</svg>
            <span className="mt-[10px] text-[29px] leading-[42px] text-[#999]">{label}</span>
          </div>
        ))}
      </div>
    </div>
    <div className="mx-auto mt-[17px] h-[11px] w-[418px] rounded-full bg-[#444]" />
  </div>
);

const App = () => (
  <div className="h-[2400px] w-[1080px] overflow-hidden bg-white font-['Inter','Noto_Sans_CJK_SC',sans-serif]">
    <StatusBar />
    <Header />
    <Quote />
    <Underlying />
    <BigOrder />
    <PeriodTabs />
    <div className="flex h-[1127px] border-b-2 border-[#dddddd]">
      <div className="w-[764px]">
        <PriceChart />
        <OpenInterest />
      </div>
      <OrderBook />
    </div>
    <CommentBar />
    <SectionTabs />
    <Posts />
    <BottomBar />
  </div>
);

export default App;
